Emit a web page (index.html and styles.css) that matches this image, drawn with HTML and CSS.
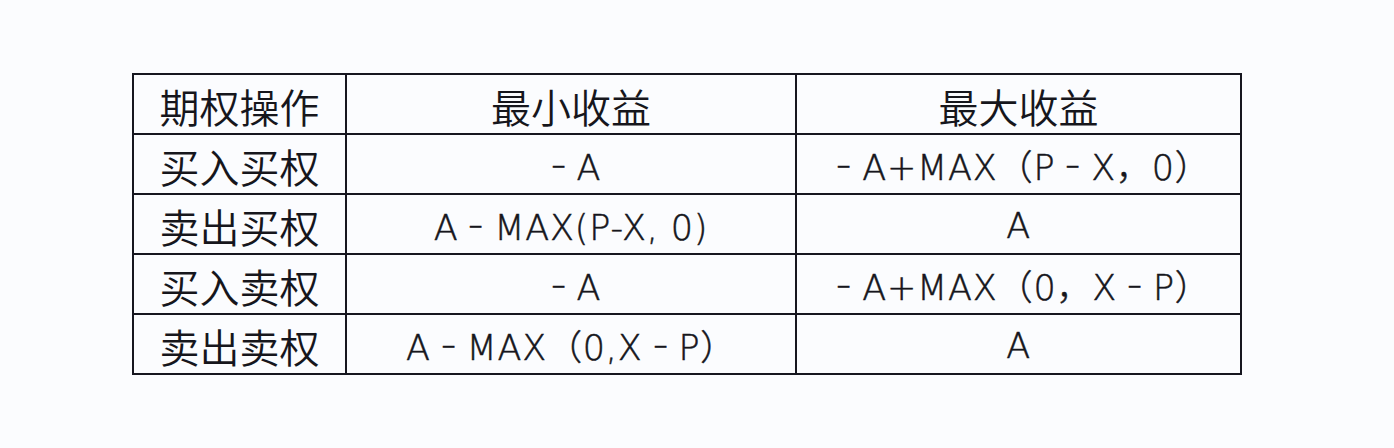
FILE: index.html
```html
<!DOCTYPE html>
<html lang="zh">
<head>
<meta charset="utf-8">
<link rel="stylesheet" href="styles.css">
</head>
<body>
<div class="page">
<table class="options">
  <colgroup>
    <col class="c1"><col class="c2"><col class="c3">
  </colgroup>
  <tr><td class="cn">期权操作</td><td class="cn">最小收益</td><td class="cn">最大收益</td></tr>
  <tr><td class="cn">买入买权</td><td class="fx"><span class="m">－</span>A</td><td class="fx"><span class="m">－</span>A+MAX（P<span class="m">－</span>X，0）</td></tr>
  <tr><td class="cn">卖出买权</td><td class="fx">A<span class="m">－</span>MAX(P-X, 0)</td><td class="fx">A</td></tr>
  <tr><td class="cn">买入卖权</td><td class="fx"><span class="m">－</span>A</td><td class="fx"><span class="m">－</span>A+MAX（0，X<span class="m">－</span>P）</td></tr>
  <tr><td class="cn">卖出卖权</td><td class="fx">A<span class="m">－</span>MAX（0,X<span class="m">－</span>P）</td><td class="fx">A</td></tr>
</table>
</div>
</body>
</html>
```
FILE: styles.css
```css
html, body {
  margin: 0;
  padding: 0;
  background: #fbfcfe;
}
.page {
  width: 1394px;
  height: 448px;
  padding: 73px 0 0 132px;
  box-sizing: border-box;
}
.options {
  border-collapse: collapse;
  table-layout: fixed;
  width: 1108px;
  color: #16161c;
  font-family: "Noto Sans CJK SC", "Noto Sans", sans-serif;
}
.c1 { width: 213px; }
.c2 { width: 450px; }
.c3 { width: 445px; }
.options td {
  border: 2px solid #16161f;
  height: 54px;
  padding: 4px 0 0 0;
  text-align: center;
  vertical-align: middle;
  line-height: 1;
  white-space: nowrap;
}
.cn {
  font-size: 40px;
  font-weight: 350;
}
.fx {
  font-family: "DejaVu Sans", "Noto Sans CJK SC", sans-serif;
  font-size: 35px;
  font-weight: 200;
  letter-spacing: 0.8px;
  -webkit-text-stroke: 0.5px #16161c;
}
.m {
  display: inline-block;
  font-family: "Noto Sans CJK SC", sans-serif;
  font-weight: 300;
  transform: scaleX(0.45);
  -webkit-text-stroke: 0.3px #16161c;
}
```
